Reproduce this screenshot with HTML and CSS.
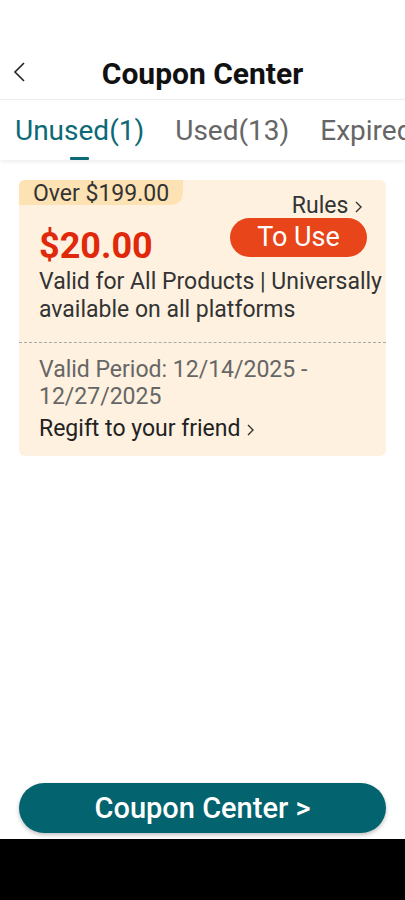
FILE: index.html
```html
<!DOCTYPE html>
<html lang="en">
<head>
    <meta charset="UTF-8">
    <meta name="viewport" content="width=device-width, initial-scale=1.0">
    <title>Coupon Center</title>
    <link rel="stylesheet" href="styles.css">
</head>
<body>
    <div class="page">
        <div class="header">
            <span class="back">
                <svg width="14" height="20" viewBox="0 0 14 20"><path d="M11 1 L2 10 L11 19" fill="none" stroke="#222" stroke-width="1.6"/></svg>
            </span>
            <h1>Coupon Center</h1>
            <span></span>
        </div>
        <div class="tabs">
            <div class="tab active">Unused(1)<i class="bar"></i></div>
            <div class="tab">Used(13)</div>
            <div class="tab">Expired(0)</div>
        </div>

        <div class="main">
            <div class="coupon">
                <span class="tag">Over $199.00</span>
                <div class="coupon-top">
                    <div class="coupon-row">
                        <div class="price">$20.00</div>
                        <div class="actions">
                            <span class="rules">Rules
                                <svg class="chev" width="8" height="12" viewBox="0 0 8 12"><path d="M2 1 L7 6 L2 11" fill="none" stroke="#333" stroke-width="1.4"/></svg>
                            </span>
                            <button class="use-btn">To Use</button>
                        </div>
                    </div>
                    <p class="desc">Valid for All Products | Universally available on all platforms</p>
                </div>
                <div class="coupon-bottom">
                    <p class="period">Valid Period: 12/14/2025 - 12/27/2025</p>
                    <p class="regift">Regift to your friend
                        <svg class="chev" width="8" height="12" viewBox="0 0 8 12"><path d="M2 1 L7 6 L2 11" fill="none" stroke="#333" stroke-width="1.4"/></svg>
                    </p>
                </div>
            </div>
        </div>

        <div class="footer">
            <button class="center-btn">Coupon Center &gt;</button>
        </div>
        <div class="navbar"></div>
    </div>
</body>
</html>
```

FILE: styles.css
```css
body {
    margin: 0;
    padding: 0;
    font-family: Roboto, "Liberation Sans", sans-serif;
    background-color: white;
    color: #222;
}
.page {
    width: 405px;
    height: 900px;
    display: flex;
    flex-direction: column;
    overflow: hidden;
}
.header {
    margin-top: 40px;
    padding-top: 8px;
    height: 51px;
    display: grid;
    grid-template-columns: 48px 1fr 48px;
    align-items: center;
    border-bottom: 1px solid #eeeeee;
}
.header h1 {
    margin: 0;
    text-align: center;
    font-size: 30px;
    font-weight: 700;
    line-height: 51px;
    color: #111;
}
.back {
    display: flex;
    padding-left: 13px;
    margin-top: -4px;
}
.tabs {
    display: flex;
    gap: 31px;
    padding-left: 15px;
    height: 60px;
    white-space: nowrap;
    overflow: hidden;
    box-shadow: 0 2px 4px rgba(0, 0, 0, 0.07);
    position: relative;
}
.tab {
    display: flex;
    flex-direction: column;
    align-items: center;
    padding-top: 14px;
    font-size: 28px;
    line-height: 34px;
    color: #666;
}
.tab.active {
    color: #0c6a76;
}
.tab .bar {
    display: block;
    width: 19px;
    height: 3px;
    margin-top: 9px;
    background-color: #0c6a76;
    border-radius: 1px;
}
.main {
    flex: 1;
    padding: 20px 19px 0;
}
.coupon {
    position: relative;
    background-color: #fef1e0;
    border-radius: 6px;
}
.tag {
    position: absolute;
    top: 0;
    left: 0;
    width: 150px;
    height: 22px;
    padding: 3px 0 0 14px;
    line-height: 22px;
    font-size: 23px;
    color: #333;
    background-color: #fde2b4;
    border-radius: 6px 0 12px 0;
}
.coupon-top {
    padding: 14px 4px 18px 20px;
    border-bottom: 1px dashed #aaa;
}
.coupon-row {
    display: flex;
    justify-content: space-between;
}
.price {
    margin-top: 32px;
    font-size: 36px;
    font-weight: 700;
    line-height: 40px;
    color: #e0290a;
}
.actions {
    display: flex;
    flex-direction: column;
    align-items: flex-end;
    padding-right: 15px;
}
.rules {
    margin-right: 5px;
    font-size: 23px;
    line-height: 24px;
    color: #333;
}
.chev {
    vertical-align: 0;
}
.use-btn {
    width: 137px;
    height: 39px;
    padding: 0;
    border: none;
    border-radius: 20px;
    background-color: #e8461a;
    color: white;
    font-family: inherit;
    font-size: 27px;
    line-height: 39px;
}
.desc {
    margin: 2px 0 0;
    font-size: 23px;
    line-height: 28px;
    color: #333;
}
.coupon-bottom {
    padding: 13px 20px 13px;
}
.period {
    margin: 0;
    font-size: 23px;
    line-height: 27px;
    color: #666;
}
.regift {
    margin: 5px 0 0;
    font-size: 23px;
    line-height: 28px;
    color: #222;
}
.footer {
    padding: 0 19px 6px;
}
.center-btn {
    width: 100%;
    height: 50px;
    border: none;
    border-radius: 25px;
    background-color: #03646f;
    color: white;
    font-family: inherit;
    font-size: 29px;
    font-weight: 500;
    box-shadow: 0 2px 4px rgba(0, 0, 0, 0.25);
}
.navbar {
    height: 61px;
    background-color: black;
}
```
